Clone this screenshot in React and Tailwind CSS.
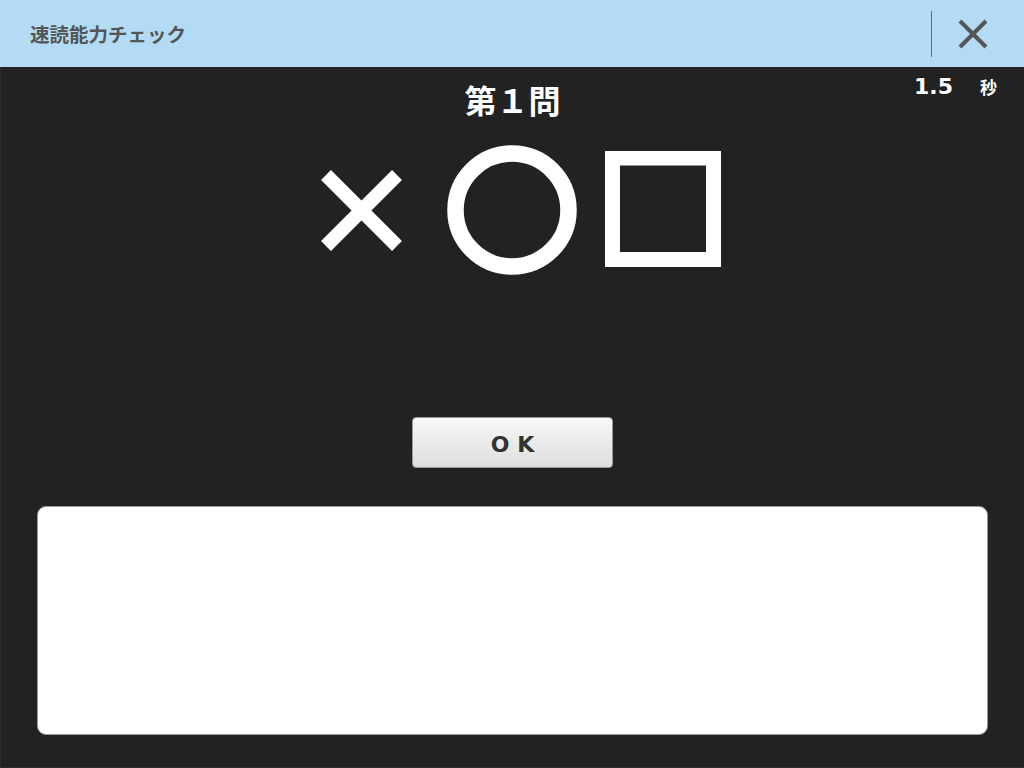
import { useState } from 'react'

const jp = "font-['Noto_Sans_CJK_JP','Noto_Sans',sans-serif]"

function Header() {
  return (
    <header className="h-[67px] bg-[#b3dcf4] flex items-center">
      <h1 className={`${jp} flex-1 pl-[30px] text-[19.5px] font-bold text-[#555]`}>速読能力チェック</h1>
      <div className="w-px h-[46px] bg-[#6b6b6b]" />
      <button className="w-[92px] h-full flex items-center pl-[26px] text-[#555]">
        <svg width="30" height="30" viewBox="0 0 30 30">
          <path d="M2 2 L28 28 M28 2 L2 28" stroke="currentColor" strokeWidth="4" />
        </svg>
      </button>
    </header>
  )
}

function Shapes() {
  return (
    <div className="flex items-center justify-center gap-[45px] h-[128px] pl-[16px]" aria-label="×○□">
      <svg width="81" height="81" viewBox="0 0 81 81">
        <path d="M5 5 L76 76 M76 5 L5 76" stroke="#fff" strokeWidth="14" />
      </svg>
      <svg width="130" height="130" viewBox="0 0 130 130">
        <circle cx="65" cy="65" r="56.5" fill="none" stroke="#fff" strokeWidth="16.5" />
      </svg>
      <svg width="116" height="116" viewBox="0 0 116 116" className="-mt-[3px] -ml-[17px]">
        <rect x="7.5" y="7" width="101" height="101.5" fill="none" stroke="#fff" strokeWidth="15" />
      </svg>
    </div>
  )
}

export default function App() {
  const [answer] = useState('')

  return (
    <div className={`${jp} w-[1024px] h-[768px] flex flex-col bg-[#222] overflow-hidden`}>
      <Header />
      <main className="relative flex-1 flex flex-col items-center border-l border-b border-[#2c2c2c]">
        <div className="absolute top-[3px] right-[27px] flex items-baseline text-white font-bold">
          <span className="text-[22px] font-['DejaVu_Sans',sans-serif]">1.5</span>
          <span className="ml-[27px] text-[17px]">秒</span>
        </div>

        <h2 className="mt-[12px] h-[40px] text-[32px] leading-[40px] font-bold text-white">第１問</h2>
        <div className="mt-[27px]">
          <Shapes />
        </div>

        <button className="mt-[143px] w-[201px] h-[51px] pt-[3px] rounded-[4px] border border-[#9a9a9a] bg-gradient-to-b from-[#f8f8f8] to-[#dedede] text-[22px] font-bold text-[#333] font-['DejaVu_Sans',sans-serif] tracking-[8px] pl-[8px]">
          OK
        </button>

        <div className="mt-[38px] w-[951px] h-[229px] rounded-[9px] bg-white border border-[#999]">
          {answer}
        </div>
      </main>
    </div>
  )
}
